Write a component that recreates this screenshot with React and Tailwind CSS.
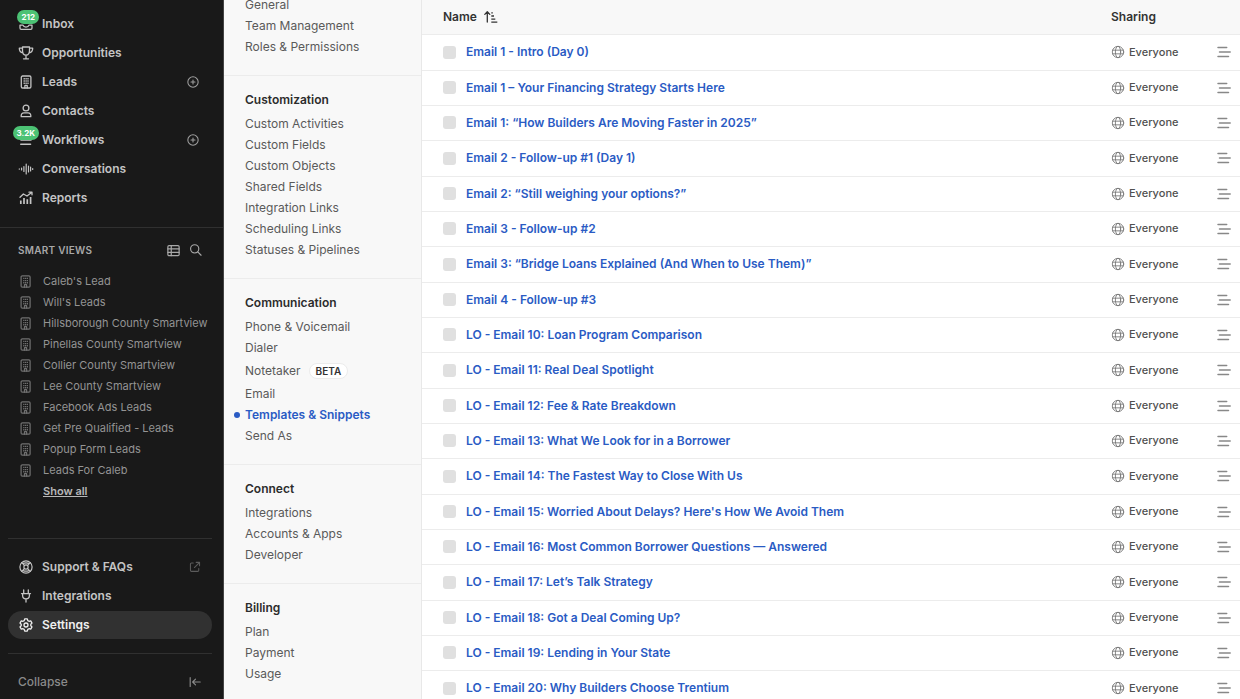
import React from "react";

const stroke = {
  fill: "none",
  stroke: "currentColor",
  strokeWidth: 1.3,
  strokeLinecap: "round",
  strokeLinejoin: "round",
  viewBox: "0 0 16 16",
  "aria-hidden": true,
};

const InboxIcon = () => (
  <svg {...stroke} className="size-4">
    <path d="M2 9.200h3c.4 1.500 1.400 1.900 3 1.900s2.600-.4 3-1.900h3v2.900a1.200 1.200 0 0 1-1.200 1.200H3.200A1.200 1.200 0 0 1 2 12.100z" />
  </svg>
);
const TrophyIcon = () => (
  <svg {...stroke} className="size-4">
    <path d="M4.500 2h7v3.500c0 2.800-1.300 4.700-3.500 4.700S4.500 8.300 4.500 5.500zM4.500 3.200H1.300c0 2.600 1.200 4.300 3.700 4.600M11.500 3.200h3.200c0 2.600-1.200 4.300-3.700 4.600M8 10.200v3.300M5.500 13.800h5" />
  </svg>
);
const BuildingIcon = ({ className = "size-4" }) => (
  <svg {...stroke} className={className}>
    <rect x="3.300" y="2" width="9.600" height="12" rx="1.300" />
    <path d="M6.900 14v-2.600h2.300V14" />
    <path strokeLinecap="butt" strokeDasharray="1.400 0.900" d="M6.200 4v6M8.100 4v6M10 4v6" />
  </svg>
);
const PersonIcon = () => (
  <svg {...stroke} className="size-4">
    <circle cx="8" cy="5" r="2.900" />
    <path d="M3.200 13.700c-.3-2.500.8-3.800 2.800-3.800h4c2 0 3.100 1.300 2.800 3.800z" />
  </svg>
);
const WorkflowIcon = () => (
  <svg {...stroke} strokeWidth="1.600" className="size-4">
    <path d="M3 3.700h10M3 8h10M2.800 12.300h9.700" />
  </svg>
);
const WaveIcon = () => (
  <svg {...stroke} strokeWidth="1.200" className="size-4">
    <path d="M1.300 7.900v.3M3.600 7v2M5.900 5.500v5M8.200 3v10M10.500 5v6M12.600 6v4M14.700 7.500v1" />
  </svg>
);
const ChartIcon = () => (
  <svg {...stroke} className="size-4">
    <path d="M2 7.300l3.400-3.300 3.600 2 4.600-3.400M11 2.200h3v2.600" />
    <path strokeWidth="1.700" strokeLinecap="butt" d="M2.800 10.500V14M6 8V14M9.300 9.300V14M12.600 7V14" />
  </svg>
);
const PlusCircleIcon = () => (
  <svg {...stroke} strokeWidth="1.200" className="size-[14px]">
    <circle cx="8" cy="8" r="5.900" />
    <path d="M8 5.700v4.600M5.700 8h4.600" />
  </svg>
);
const ListIcon = () => (
  <svg {...stroke} className="size-[15px]">
    <rect x="2" y="2.700" width="12" height="10.800" rx="1.200" />
    <path d="M2 6.300h12M2 9.900h12M5.600 2.700v10.800" />
  </svg>
);
const SearchIcon = () => (
  <svg {...stroke} className="size-[14px]">
    <circle cx="6.500" cy="6.700" r="4.700" />
    <path d="M10 10.200l3.800 3.800" />
  </svg>
);
const LifebuoyIcon = () => (
  <svg {...stroke} strokeWidth="1.200" className="size-4">
    <circle cx="8" cy="8" r="6.100" />
    <circle cx="8" cy="8" r="2.100" />
    <path d="M3.700 3.700l2.700 2.700M12.300 3.700L9.600 6.400M3.700 12.300l2.700-2.700M12.300 12.300L9.600 9.600M5.200 4.400c1.800-.7 3.800-.7 5.600 0M5.200 11.600c1.800.7 3.800.7 5.600 0" />
  </svg>
);
const PlugIcon = () => (
  <svg {...stroke} className="size-4">
    <path d="M5.700 2v3.500M10.300 2v3.500M3.500 5.600h9M4.600 5.700v1.800c0 2.200 1.200 3.400 3.400 3.400s3.400-1.200 3.400-3.400V5.700M8 11v3" />
  </svg>
);
const GearIcon = () => (
  <svg {...stroke} className="size-4">
    <path d="M6.700 1.900h2.600l.5 1.700 1.200.7 1.700-.5L14 6.100l-1.200 1.200v1.400L14 9.900l-1.300 2.300-1.700-.5-1.200.7-.5 1.700H6.700l-.5-1.700-1.200-.7-1.700.5L2 9.900l1.200-1.200V7.300L2 6.100l1.300-2.300 1.700.5 1.200-.7z" />
    <circle cx="8" cy="8" r="2" />
  </svg>
);
const ExternalIcon = () => (
  <svg {...stroke} strokeWidth="1.200" className="size-[14px]">
    <path d="M6 3.500H4A1.200 1.200 0 0 0 2.800 4.700v7.100A1.200 1.200 0 0 0 4 13h7.100a1.200 1.200 0 0 0 1.200-1.200V9.600M9.300 2.700h3.900v3.900M13 2.900L7.300 8.600" />
  </svg>
);
const CollapseIcon = () => (
  <svg {...stroke} className="size-[14px]">
    <path d="M2.500 3v10M14 8H5.300M8.600 4.700L5.300 8l3.300 3.300" />
  </svg>
);
const SortIcon = () => (
  <svg {...stroke} className="size-4">
    <path d="M4.300 13V3M1.800 5.400l2.500-2.600 2.500 2.600" />
    <path strokeLinecap="butt" d="M8.300 3.800h1.500M8.300 7h2.700M8.300 10.100h4M8.300 13.200h6" />
  </svg>
);
const GlobeIcon = () => (
  <svg {...stroke} strokeWidth="1" className="size-[14px] text-[#777]">
    <circle cx="8" cy="8" r="6.500" />
    <ellipse cx="8" cy="8" rx="3" ry="6.500" />
    <path d="M1.700 5.900h12.600M1.700 10.100h12.600" />
  </svg>
);
const RowMenuIcon = () => (
  <svg {...stroke} strokeWidth="1.500" className="size-4">
    <path d="M2 3.600h8.700M3.500 8h10.700M2 12.400h10.500" />
  </svg>
);

const mainNav = [
  { label: "Inbox", Icon: InboxIcon, badge: "212" },
  { label: "Opportunities", Icon: TrophyIcon },
  { label: "Leads", Icon: BuildingIcon, add: true },
  { label: "Contacts", Icon: PersonIcon },
  { label: "Workflows", Icon: WorkflowIcon, badge: "3.2K", add: true },
  { label: "Conversations", Icon: WaveIcon },
  { label: "Reports", Icon: ChartIcon },
];

const smartViews = [
  "Caleb's Lead",
  "Will's Leads",
  "Hillsborough County Smartview",
  "Pinellas County Smartview",
  "Collier County Smartview",
  "Lee County Smartview",
  "Facebook Ads Leads",
  "Get Pre Qualified - Leads",
  "Popup Form Leads",
  "Leads For Caleb",
];

const settingsSections = [
  { items: ["General", "Team Management", "Roles & Permissions"] },
  {
    title: "Customization",
    items: [
      "Custom Activities",
      "Custom Fields",
      "Custom Objects",
      "Shared Fields",
      "Integration Links",
      "Scheduling Links",
      "Statuses & Pipelines",
    ],
  },
  {
    title: "Communication",
    items: ["Phone & Voicemail", "Dialer", "Notetaker", "Email", "Templates & Snippets", "Send As"],
  },
  { title: "Connect", items: ["Integrations", "Accounts & Apps", "Developer"] },
  { title: "Billing", items: ["Plan", "Payment", "Usage"] },
];

const templates = [
  "Email 1 - Intro (Day 0)",
  "Email 1 – Your Financing Strategy Starts Here",
  "Email 1: “How Builders Are Moving Faster in 2025”",
  "Email 2 - Follow-up #1 (Day 1)",
  "Email 2: “Still weighing your options?”",
  "Email 3 - Follow-up #2",
  "Email 3: “Bridge Loans Explained (And When to Use Them)”",
  "Email 4 - Follow-up #3",
  "LO - Email 10: Loan Program Comparison",
  "LO - Email 11: Real Deal Spotlight",
  "LO - Email 12: Fee & Rate Breakdown",
  "LO - Email 13: What We Look for in a Borrower",
  "LO - Email 14: The Fastest Way to Close With Us",
  "LO - Email 15: Worried About Delays? Here's How We Avoid Them",
  "LO - Email 16: Most Common Borrower Questions — Answered",
  "LO - Email 17: Let’s Talk Strategy",
  "LO - Email 18: Got a Deal Coming Up?",
  "LO - Email 19: Lending in Your State",
  "LO - Email 20: Why Builders Choose Trentium",
];

function NavRow({ label, Icon, badge, add, active, trailing }) {
  return (
    <li
      className={
        active
          ? "flex h-7 items-center rounded-full bg-[#313131] px-[10px] text-[#efefef]"
          : "flex h-7 items-center rounded-full px-[10px] text-[#c4c4c4]"
      }
    >
      <a href="#" className="flex grow items-center gap-2 text-xs font-semibold">
        <span className="relative flex">
          <Icon />
          {badge && (
            <span className="absolute right-[-5px] bottom-2 rounded-full bg-[#4cc274] px-1 text-[8px] leading-[14px] font-bold text-white">
              {badge}
            </span>
          )}
        </span>
        {label}
      </a>
      {add && (
        <button type="button" aria-label={`Add to ${label}`} className="text-[#a0a0a0]">
          <PlusCircleIcon />
        </button>
      )}
      {trailing}
    </li>
  );
}

function Sidebar() {
  return (
    <aside className="flex w-56 shrink-0 flex-col overflow-hidden border-r border-[#444] bg-[#191919]">
      <nav className="border-b border-[#303030] pt-[10px] pr-[13px] pb-[15px] pl-2">
        <ul className="flex flex-col gap-px">
          {mainNav.map((item) => (
            <NavRow key={item.label} {...item} />
          ))}
        </ul>
      </nav>
      <section className="pt-3">
        <header className="flex items-center gap-2 pr-5 pl-[18px] text-[#a8a8a8]">
          <h2 className="grow text-[10px] leading-5 font-semibold tracking-wide">SMART VIEWS</h2>
          <button type="button" aria-label="Manage smart views">
            <ListIcon />
          </button>
          <button type="button" aria-label="Search smart views">
            <SearchIcon />
          </button>
        </header>
        <ul className="pt-[11px] pl-[18px] text-[11px] leading-[21px] text-[#949494]">
          {smartViews.map((name) => (
            <li key={name}>
              <a href="#" className="flex items-center gap-[10px] whitespace-nowrap">
                <BuildingIcon className="size-[15px] text-[#707070]" />
                {name}
              </a>
            </li>
          ))}
        </ul>
        <a
          href="#"
          className="ml-[43px] block w-fit text-[11px] leading-5 font-semibold text-[#b8b8b8] underline"
        >
          Show all
        </a>
      </section>
      <div className="mt-auto mr-[11px] ml-2 border-y border-[#303030] py-[14px]">
        <ul className="flex flex-col gap-px">
          <NavRow
            label="Support & FAQs"
            Icon={LifebuoyIcon}
            trailing={
              <span className="text-[#5c5c5c]">
                <ExternalIcon />
              </span>
            }
          />
          <NavRow label="Integrations" Icon={PlugIcon} />
          <NavRow label="Settings" Icon={GearIcon} active />
        </ul>
      </div>
      <button
        type="button"
        className="mt-[11px] flex h-[34px] items-center justify-between pr-[21px] pl-[18px] text-xs font-medium text-[#8a8a8a]"
      >
        Collapse
        <CollapseIcon />
      </button>
    </aside>
  );
}

function SettingsItem({ name }) {
  if (name === "Templates & Snippets") {
    return (
      <li className="relative leading-[21px]">
        <span className="absolute top-2 -left-[11px] size-[6px] rounded-full bg-[#2a5bc4]" />
        <a href="#" aria-current="page" className="font-semibold text-[#2a5bc4]">
          {name}
        </a>
      </li>
    );
  }
  if (name === "Notetaker") {
    return (
      <li className="flex h-[25px] items-center gap-2">
        <a href="#">{name}</a>
        <span className="rounded-full border border-[#ececec] bg-white px-[6px] text-[10px] leading-[14px] font-semibold text-[#333]">
          BETA
        </span>
      </li>
    );
  }
  return (
    <li className="leading-[21px]">
      <a href="#">{name}</a>
    </li>
  );
}

function SettingsNav() {
  return (
    <nav
      aria-label="Settings"
      className="w-[198px] shrink-0 overflow-hidden border-r border-[#e8e8e8] bg-[#f8f8f8] text-xs text-[#5a5a5a]"
    >
      <div className="-mt-[6px] divide-y divide-[#ececec]">
        {settingsSections.map(({ title, items }) => (
          <section key={items[0]} className="pb-[18px] pl-[21px]">
            {title && <h2 className="pt-[13px] pb-[2px] leading-[22px] font-semibold text-[#2c2c2c]">{title}</h2>}
            <ul>
              {items.map((name) => (
                <SettingsItem key={name} name={name} />
              ))}
            </ul>
          </section>
        ))}
      </div>
    </nav>
  );
}

function TemplateTable() {
  return (
    <main className="min-w-0 grow overflow-hidden bg-white">
      <table className="w-full table-fixed text-left text-xs">
        <colgroup>
          <col className="w-11" />
          <col />
          <col className="w-[105px]" />
          <col className="w-6" />
        </colgroup>
        <thead>
          <tr className="h-[34px] border-b border-[#ececec] bg-[#f8f8f8] text-[#333]">
            <th scope="col" colSpan={2} className="p-0 pl-[21px] font-semibold">
              <button type="button" className="flex items-center gap-[6px]">
                Name
                <SortIcon />
              </button>
            </th>
            <th scope="col" colSpan={2} className="p-0 font-semibold">
              Sharing
            </th>
          </tr>
        </thead>
        <tbody>
          {templates.map((name) => (
            <tr key={name} className="h-[35px] border-b border-[#ececec] nth-[3n+1]:h-9">
              <td className="p-0 pl-[21px]">
                <input
                  type="checkbox"
                  aria-label={`Select ${name}`}
                  className="block size-[13px] appearance-none rounded-[3px] bg-[#e0e0e0] checked:bg-[#2a5bc4]"
                />
              </td>
              <td className="truncate p-0">
                <a href="#" className="font-semibold text-[#2a5bc4]">
                  {name}
                </a>
              </td>
              <td className="p-0">
                <span className="flex items-center gap-1 text-[11px] font-medium text-[#505050]">
                  <GlobeIcon />
                  Everyone
                </span>
              </td>
              <td className="p-0">
                <button type="button" aria-label={`Actions for ${name}`} className="block text-[#888]">
                  <RowMenuIcon />
                </button>
              </td>
            </tr>
          ))}
        </tbody>
      </table>
    </main>
  );
}

export default function App() {
  return (
    <div className="flex h-screen overflow-hidden font-['Inter',sans-serif]">
      <Sidebar />
      <SettingsNav />
      <TemplateTable />
    </div>
  );
}
